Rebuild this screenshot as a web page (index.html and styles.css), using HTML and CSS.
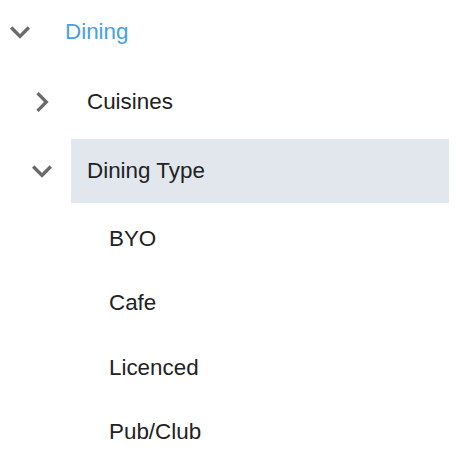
FILE: index.html
```html
<!DOCTYPE html>
<html lang="en">
  <head>
    <meta charset="UTF-8">
    <meta name="viewport" content="width=device-width, initial-scale=1.0">
    <title>Dining tree</title>
    <link rel="stylesheet" href="styles.css">
  </head>
  <body>
    <ul class="tree">
      <li class="node">
        <div class="row">
          <span class="toggle">
            <svg viewBox="0 0 24 24" width="40" height="40"><path d="M16.59 8.59L12 13.17 7.41 8.59 6 10l6 6 6-6z"/></svg>
          </span>
          <span class="label label-active">Dining</span>
        </div>
        <ul class="children">
          <li class="node">
            <div class="row">
              <span class="toggle">
                <svg viewBox="0 0 24 24" width="40" height="40"><path d="M10 6L8.59 7.41 13.17 12l-4.58 4.59L10 18l6-6z"/></svg>
              </span>
              <span class="label">Cuisines</span>
            </div>
          </li>
          <li class="node">
            <div class="row">
              <span class="toggle">
                <svg viewBox="0 0 24 24" width="40" height="40"><path d="M16.59 8.59L12 13.17 7.41 8.59 6 10l6 6 6-6z"/></svg>
              </span>
              <span class="label label-selected">Dining Type</span>
            </div>
            <ul class="children leaves">
              <li class="leaf"><div class="row"><span class="toggle"></span><span class="label">BYO</span></div></li>
              <li class="leaf"><div class="row"><span class="toggle"></span><span class="label">Cafe</span></div></li>
              <li class="leaf"><div class="row"><span class="toggle"></span><span class="label">Licenced</span></div></li>
              <li class="leaf"><div class="row"><span class="toggle"></span><span class="label">Pub/Club</span></div></li>
            </ul>
          </li>
        </ul>
      </li>
    </ul>
  </body>
</html>
```

FILE: styles.css
```css
body {
    margin: 0;
    font-family: "Liberation Sans", Arial, Helvetica, sans-serif;
    font-size: 22.4px;
    color: #222;
    background: #fff;
}
ul {
    list-style: none;
    margin: 0;
    padding: 0;
}
.tree {
    width: 449px;
}
.children {
    padding-left: 22px;
}
.node > .row {
    margin-bottom: 5.5px;
}
.leaves {
    padding-top: 3.5px;
    margin-top: -5.5px;
}
.row {
    display: flex;
    align-items: center;
    gap: 9px;
}
.leaf .row {
    height: 64.5px;
}
.toggle {
    flex: 0 0 40px;
    width: 40px;
    height: 40px;
    display: flex;
    fill: #6a6a6a;
}
.label {
    flex: 1;
    height: 64px;
    display: flex;
    align-items: center;
    padding-left: 16px;
}
.label-active {
    color: #45a1e3;
}
.label-selected {
    background-color: #e2e7ee;
}
```
